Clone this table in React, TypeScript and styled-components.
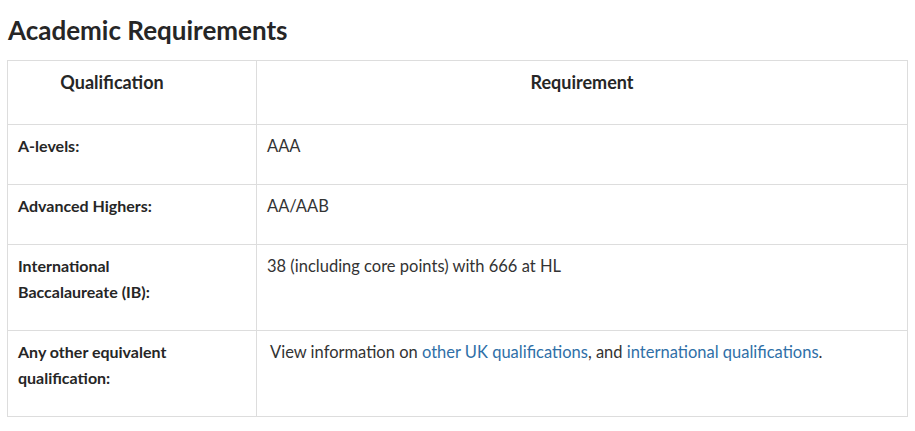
import React from 'react';
import styled, { createGlobalStyle } from 'styled-components';

const GlobalStyle = createGlobalStyle`
  body {
    margin: 0;
    background: #ffffff;
    font-family: Lato, "Open Sans", Arial, sans-serif;
    color: #333333;
  }
`;

const Page = styled.div`
  padding: 14px 8px 16px 7px;
`;

const Title = styled.h2`
  margin: 0 0 14px 1px;
  font-size: 26px;
  line-height: 32px;
  font-weight: 700;
  color: #262626;
`;

const Table = styled.table`
  width: 901px;
  border-collapse: collapse;
  table-layout: fixed;
  line-height: 26px;
`;

const LabelCol = styled.col`
  width: 249px;
`;

const HeadCell = styled.th<{ $shift?: number }>`
  border: 1px solid #dddddd;
  padding: 8px ${p => 10 + (p.$shift ?? 0)}px 29px 10px;
  font-size: 18px;
  font-weight: 700;
  color: #262626;
  text-align: center;
  vertical-align: top;
`;

const LabelCell = styled.td`
  border: 1px solid #dddddd;
  padding: 8px 10px 25px 10px;
  font-size: 16px;
  font-weight: 700;
  color: #262626;
  vertical-align: top;
`;

const ValueCell = styled.td<{ $lead?: boolean }>`
  border: 1px solid #dddddd;
  padding: 8px 10px 25px ${p => (p.$lead ? 13 : 10)}px;
  font-size: 16.5px;
  color: #333333;
  vertical-align: top;
`;

const Link = styled.a`
  color: #2f6fa7;
  text-decoration: none;
`;

const rows: { label: React.ReactNode; value: React.ReactNode; lead?: boolean }[] = [
  { label: 'A-levels:', value: 'AAA' },
  { label: 'Advanced Highers:', value: 'AA/AAB' },
  {
    label: (
      <>
        International
        <br />
        Baccalaureate (IB):
      </>
    ),
    value: '38 (including core points) with 666 at HL',
  },
  {
    label: (
      <>
        Any other equivalent
        <br />
        qualification:
      </>
    ),
    value: (
      <>
        View information on <Link href="#">other UK qualifications</Link>, and{' '}
        <Link href="#">international qualifications</Link>.
      </>
    ),
    lead: true,
  },
];

export default function App() {
  return (
    <>
      <GlobalStyle />
      <Page>
        <Title>Academic Requirements</Title>
        <Table>
          <colgroup>
            <LabelCol />
            <col />
          </colgroup>
          <thead>
            <tr>
              <HeadCell $shift={40}>Qualification</HeadCell>
              <HeadCell>Requirement</HeadCell>
            </tr>
          </thead>
          <tbody>
            {rows.map((r, i) => (
              <tr key={i}>
                <LabelCell>{r.label}</LabelCell>
                <ValueCell $lead={r.lead}>{r.value}</ValueCell>
              </tr>
            ))}
          </tbody>
        </Table>
      </Page>
    </>
  );
}
